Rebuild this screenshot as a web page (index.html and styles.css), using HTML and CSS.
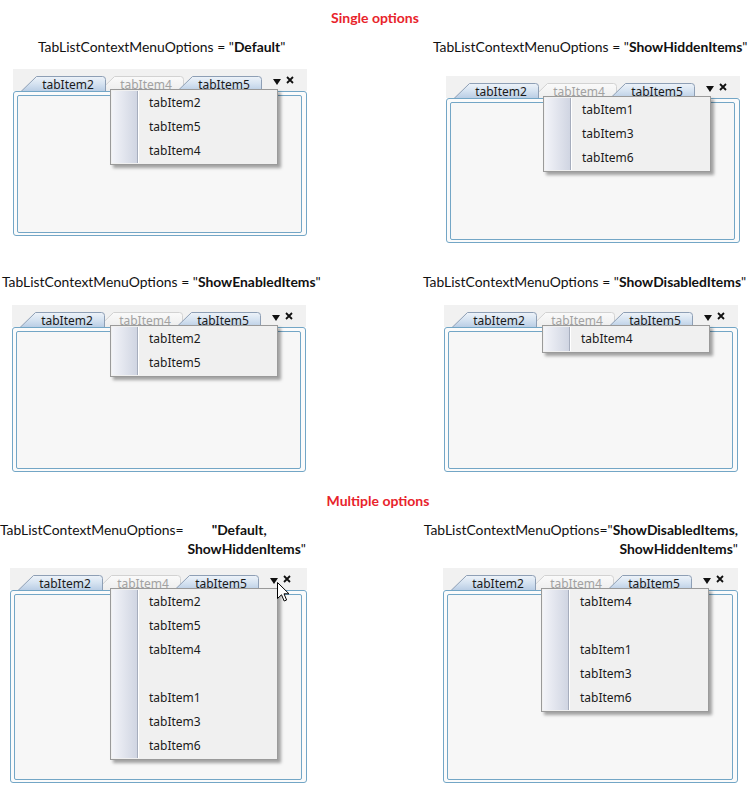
FILE: index.html
```html
<!DOCTYPE html>
<html>
<head>
<meta charset="utf-8">
<link rel="stylesheet" href="styles.css">
</head>
<body>
<svg class="defs" width="0" height="0" aria-hidden="true">
  <defs>
    <linearGradient id="tabOn" x1="0" y1="0" x2="0" y2="1">
      <stop offset="0" stop-color="#eef3f9"/>
      <stop offset="0.45" stop-color="#d6e3f1"/>
      <stop offset="1" stop-color="#b4c9e2"/>
    </linearGradient>
    <linearGradient id="tabOff" x1="0" y1="0" x2="0" y2="1">
      <stop offset="0" stop-color="#fafafa"/>
      <stop offset="1" stop-color="#ececec"/>
    </linearGradient>
  </defs>
</svg>
<div class="page">
  <h2 class="heading heading-single">Single options</h2>

  <div class="row row-1">
    <div class="cell">
      <p class="title title-l1">TabListContextMenuOptions = "<b>Default</b>"</p>
      <div class="tc tc-l1">
        <div class="strip">
          <div class="tab tab-on"><svg class="tab-bg" viewBox="0 0 86 17"><path d="M0 17.5 L16.5 1.5 H82.5 Q85.5 1.5 85.5 4.5 V17.5" /></svg><span>tabItem2</span></div>
          <div class="tab tab-off"><svg class="tab-bg" viewBox="0 0 86 17"><path d="M0 17.5 L16.5 1.5 H82.5 Q85.5 1.5 85.5 4.5 V17.5" /></svg><span>tabItem4</span></div>
          <div class="tab tab-on"><svg class="tab-bg" viewBox="0 0 86 17"><path d="M0 17.5 L16.5 1.5 H82.5 Q85.5 1.5 85.5 4.5 V17.5" /></svg><span>tabItem5</span></div>
          <svg class="drop" viewBox="0 0 8 6"><path d="M0 0 H8 L4 6 Z"/></svg>
          <svg class="close" viewBox="0 0 8 8"><path d="M1 1 L7 7 M7 1 L1 7"/></svg>
        </div>
        <div class="box"><div class="inner"></div></div>
        <div class="menu">
          <div class="gutter"></div>
          <ul class="items"><li>tabItem2</li><li>tabItem5</li><li>tabItem4</li></ul>
        </div>
      </div>
    </div>
    <div class="cell">
      <p class="title title-r1">TabListContextMenuOptions = "<b>ShowHiddenItems</b>"</p>
      <div class="tc tc-r1">
        <div class="strip">
          <div class="tab tab-on"><svg class="tab-bg" viewBox="0 0 86 17"><path d="M0 17.5 L16.5 1.5 H82.5 Q85.5 1.5 85.5 4.5 V17.5" /></svg><span>tabItem2</span></div>
          <div class="tab tab-off"><svg class="tab-bg" viewBox="0 0 86 17"><path d="M0 17.5 L16.5 1.5 H82.5 Q85.5 1.5 85.5 4.5 V17.5" /></svg><span>tabItem4</span></div>
          <div class="tab tab-on"><svg class="tab-bg" viewBox="0 0 86 17"><path d="M0 17.5 L16.5 1.5 H82.5 Q85.5 1.5 85.5 4.5 V17.5" /></svg><span>tabItem5</span></div>
          <svg class="drop" viewBox="0 0 8 6"><path d="M0 0 H8 L4 6 Z"/></svg>
          <svg class="close" viewBox="0 0 8 8"><path d="M1 1 L7 7 M7 1 L1 7"/></svg>
        </div>
        <div class="box"><div class="inner"></div></div>
        <div class="menu">
          <div class="gutter"></div>
          <ul class="items"><li>tabItem1</li><li>tabItem3</li><li>tabItem6</li></ul>
        </div>
      </div>
    </div>
  </div>

  <div class="row row-2">
    <div class="cell">
      <p class="title title-l2">TabListContextMenuOptions = "<b>ShowEnabledItems</b>"</p>
      <div class="tc tc-l2">
        <div class="strip">
          <div class="tab tab-on"><svg class="tab-bg" viewBox="0 0 86 17"><path d="M0 17.5 L16.5 1.5 H82.5 Q85.5 1.5 85.5 4.5 V17.5" /></svg><span>tabItem2</span></div>
          <div class="tab tab-off"><svg class="tab-bg" viewBox="0 0 86 17"><path d="M0 17.5 L16.5 1.5 H82.5 Q85.5 1.5 85.5 4.5 V17.5" /></svg><span>tabItem4</span></div>
          <div class="tab tab-on"><svg class="tab-bg" viewBox="0 0 86 17"><path d="M0 17.5 L16.5 1.5 H82.5 Q85.5 1.5 85.5 4.5 V17.5" /></svg><span>tabItem5</span></div>
          <svg class="drop" viewBox="0 0 8 6"><path d="M0 0 H8 L4 6 Z"/></svg>
          <svg class="close" viewBox="0 0 8 8"><path d="M1 1 L7 7 M7 1 L1 7"/></svg>
        </div>
        <div class="box"><div class="inner"></div></div>
        <div class="menu menu-m">
          <div class="gutter"></div>
          <ul class="items"><li>tabItem2</li><li>tabItem5</li></ul>
        </div>
      </div>
    </div>
    <div class="cell">
      <p class="title title-r2">TabListContextMenuOptions = "<b>ShowDisabledItems</b>"</p>
      <div class="tc tc-r2">
        <div class="strip">
          <div class="tab tab-on"><svg class="tab-bg" viewBox="0 0 86 17"><path d="M0 17.5 L16.5 1.5 H82.5 Q85.5 1.5 85.5 4.5 V17.5" /></svg><span>tabItem2</span></div>
          <div class="tab tab-off"><svg class="tab-bg" viewBox="0 0 86 17"><path d="M0 17.5 L16.5 1.5 H82.5 Q85.5 1.5 85.5 4.5 V17.5" /></svg><span>tabItem4</span></div>
          <div class="tab tab-on"><svg class="tab-bg" viewBox="0 0 86 17"><path d="M0 17.5 L16.5 1.5 H82.5 Q85.5 1.5 85.5 4.5 V17.5" /></svg><span>tabItem5</span></div>
          <svg class="drop" viewBox="0 0 8 6"><path d="M0 0 H8 L4 6 Z"/></svg>
          <svg class="close" viewBox="0 0 8 8"><path d="M1 1 L7 7 M7 1 L1 7"/></svg>
        </div>
        <div class="box"><div class="inner"></div></div>
        <div class="menu menu-m">
          <div class="gutter"></div>
          <ul class="items"><li>tabItem4</li></ul>
        </div>
      </div>
    </div>
  </div>

  <h2 class="heading heading-multi">Multiple options</h2>

  <div class="row row-3">
    <div class="cell">
      <div class="title2 title-l3">
        <div class="line line-split"><span>TabListContextMenuOptions=</span><b>"Default,</b></div>
        <div class="line line-right"><b>ShowHiddenItems</b>"</div>
      </div>
      <div class="tc tc-l3">
        <div class="strip">
          <div class="tab tab-on"><svg class="tab-bg" viewBox="0 0 86 17"><path d="M0 17.5 L16.5 1.5 H82.5 Q85.5 1.5 85.5 4.5 V17.5" /></svg><span>tabItem2</span></div>
          <div class="tab tab-off"><svg class="tab-bg" viewBox="0 0 86 17"><path d="M0 17.5 L16.5 1.5 H82.5 Q85.5 1.5 85.5 4.5 V17.5" /></svg><span>tabItem4</span></div>
          <div class="tab tab-on"><svg class="tab-bg" viewBox="0 0 86 17"><path d="M0 17.5 L16.5 1.5 H82.5 Q85.5 1.5 85.5 4.5 V17.5" /></svg><span>tabItem5</span></div>
          <svg class="drop" viewBox="0 0 8 6"><path d="M0 0 H8 L4 6 Z"/></svg>
          <svg class="close" viewBox="0 0 8 8"><path d="M1 1 L7 7 M7 1 L1 7"/></svg>
        </div>
        <div class="box box-tall"><div class="inner"></div></div>
        <div class="menu menu-l3">
          <div class="gutter"></div>
          <ul class="items"><li>tabItem2</li><li>tabItem5</li><li>tabItem4</li><li class="blank"></li><li>tabItem1</li><li>tabItem3</li><li>tabItem6</li></ul>
        </div>
        <svg class="cursor" viewBox="0 0 13 20"><path d="M0.5 0.5 V16.5 L4.5 12.8 L7.2 19 L9.6 18 L7 11.8 H12 Z"/></svg>
      </div>
    </div>
    <div class="cell">
      <div class="title2 title-r3">
        <div class="line">TabListContextMenuOptions="<b>ShowDisabledItems,</b></div>
        <div class="line"><b>ShowHiddenItems</b>"</div>
      </div>
      <div class="tc tc-r3">
        <div class="strip">
          <div class="tab tab-on"><svg class="tab-bg" viewBox="0 0 86 17"><path d="M0 17.5 L16.5 1.5 H82.5 Q85.5 1.5 85.5 4.5 V17.5" /></svg><span>tabItem2</span></div>
          <div class="tab tab-off"><svg class="tab-bg" viewBox="0 0 86 17"><path d="M0 17.5 L16.5 1.5 H82.5 Q85.5 1.5 85.5 4.5 V17.5" /></svg><span>tabItem4</span></div>
          <div class="tab tab-on"><svg class="tab-bg" viewBox="0 0 86 17"><path d="M0 17.5 L16.5 1.5 H82.5 Q85.5 1.5 85.5 4.5 V17.5" /></svg><span>tabItem5</span></div>
          <svg class="drop" viewBox="0 0 8 6"><path d="M0 0 H8 L4 6 Z"/></svg>
          <svg class="close" viewBox="0 0 8 8"><path d="M1 1 L7 7 M7 1 L1 7"/></svg>
        </div>
        <div class="box box-tall"><div class="inner"></div></div>
        <div class="menu menu-m">
          <div class="gutter"></div>
          <ul class="items"><li>tabItem4</li><li class="blank"></li><li>tabItem1</li><li>tabItem3</li><li>tabItem6</li></ul>
        </div>
      </div>
    </div>
  </div>
</div>
</body>
</html>
```

FILE: styles.css
```css
* { box-sizing: border-box; }
html, body { margin: 0; padding: 0; background: #ffffff; }
body { width: 750px; height: 785px; overflow: hidden; font-family: Lato, "Open Sans", sans-serif; color: #111; }

.defs { position: absolute; width: 0; height: 0; overflow: hidden; }

.page { padding-top: 8px; }

.heading {
  margin: 0;
  font-size: 14px;
  line-height: 20px;
  font-weight: 700;
  color: #e8232b;
  text-align: center;
}
.heading-multi { padding-left: 6px; margin-top: 19px; }

.row { display: grid; grid-template-columns: 375px 375px; align-items: start; }
.row-1 { margin-top: 9px; }
.row-2 { margin-top: 29px; }
.row-3 { margin-top: 8px; }

.cell { display: flex; flex-direction: column; align-items: flex-start; }

.title {
  margin: 0;
  font-size: 13.9px;
  line-height: 20px;
  white-space: nowrap;
}
.title b { font-weight: 700; }
.title-l1 { margin-left: 38px; }
.title-r1 { margin-left: 58px; }
.title-l2 { margin-left: 2px; }
.title-r2 { margin-left: 48px; }

.title2 { font-size: 13.9px; line-height: 19px; white-space: nowrap; }
.title-l3 { width: 306px; margin-top: 1px; }
.title-r3 { width: 315px; margin-left: 48px; margin-top: 1px; text-align: right; }
.line-split { display: flex; }
.line-split b { margin-left: 28px; }
.line-right { text-align: right; }

/* tab control */
.tc { position: relative; width: 294px; }
.tc-l1 { margin-left: 13px; margin-top: 12px; }
.tc-r1 { margin-left: 71px; margin-top: 19px; }
.tc-l2 { margin-left: 12px; margin-top: 13px; }
.tc-r2 { margin-left: 69px; margin-top: 13px; }
.tc-l3 { margin-left: 10px; margin-top: 10px; width: 297px; }
.tc-r3 { margin-left: 68px; margin-top: 10px; width: 295px; }

.strip {
  height: 22px;
  background: #f1f1f1;
  display: flex;
  align-items: flex-end;
  padding-left: 7px;
}

.tab {
  position: relative;
  width: 86px;
  height: 17px;
  margin-bottom: -1px;
  font-family: "Noto Sans", "Open Sans", sans-serif;
  font-size: 12px;
  line-height: 17px;
  text-align: center;
  padding-left: 10px;
}
.tab + .tab { margin-left: -8px; }
.tab-bg { position: absolute; left: 0; top: 0; width: 86px; height: 17px; overflow: visible; }
.tab span { position: relative; display: block; padding-top: 1px; }
.tab-on { z-index: 2; color: #1a1a1a; }
.tab-on .tab-bg path { fill: url(#tabOn); stroke: #8e9fb5; stroke-width: 1; }
.tab-off { z-index: 1; color: #a2a2a2; }
.tab-off .tab-bg path { fill: url(#tabOff); stroke: #d2d2d2; stroke-width: 1; }

.drop { width: 8px; height: 6px; margin-left: 11px; margin-bottom: 6px; fill: #111; }
.close { width: 8px; height: 8px; margin-left: 5px; margin-bottom: 7px; stroke: #111; stroke-width: 1.8; fill: none; }

.box {
  height: 145px;
  border: 1px solid #73a6c6;
  border-radius: 3px;
  background: #fbfbfb;
  padding: 3px 4px 2px 3px;
  position: relative;
  z-index: 3;
}
.box-tall { height: 193px; }
.inner {
  height: 100%;
  border: 1px solid #73a6c6;
  border-radius: 2px;
  background: #f7f7f7;
}

.menu {
  position: absolute;
  z-index: 5;
  left: 97px;
  top: 20px;
  width: 168px;
  display: flex;
  padding: 1px;
  border: 1px solid #9a9a9a;
  background: #f0f0f0;
  box-shadow: 3px 3px 3px rgba(0, 0, 0, 0.35);
}
.menu-m { left: 98px; }
.menu-l3 { left: 100px; }
.gutter {
  width: 26px;
  flex: none;
  background: linear-gradient(to right, #f3f4f9, #d0d5e2);
  border-right: 1px solid #a6adbd;
  box-shadow: 1px 0 0 #ffffff;
}
.items {
  list-style: none;
  margin: 0;
  padding: 0 0 0 11px;
  font-family: "Noto Sans", "Open Sans", sans-serif;
  font-size: 12px;
  color: #1a1a1a;
}
.items li { height: 24px; line-height: 24px; }

.cursor {
  position: absolute;
  z-index: 6;
  left: 267px;
  top: 14px;
  width: 13px;
  height: 20px;
  fill: #ffffff;
  stroke: #000000;
  stroke-width: 1;
}
```
